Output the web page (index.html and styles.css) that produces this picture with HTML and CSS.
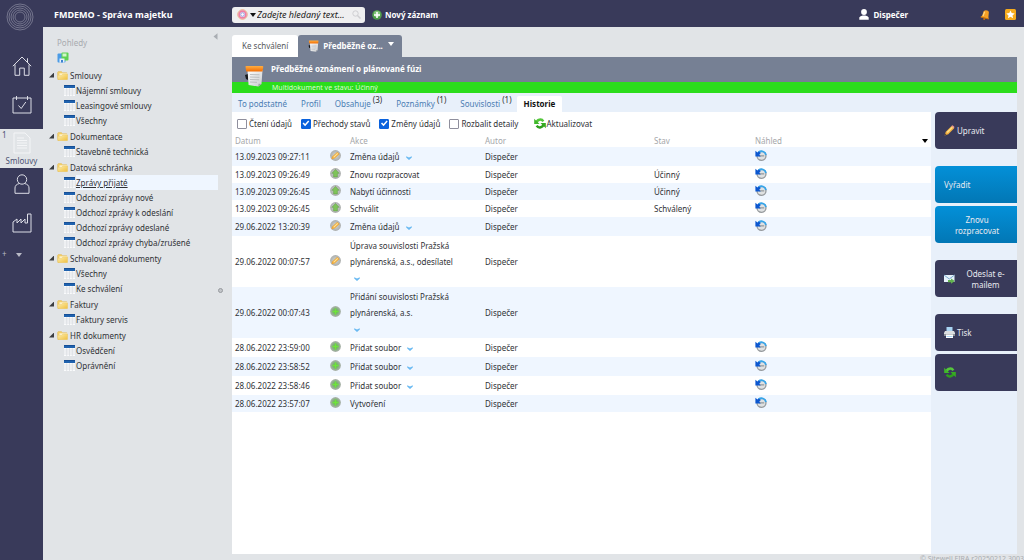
FILE: index.html
```html
<!DOCTYPE html>
<html lang="cs">
<head>
    <meta charset="UTF-8">
    <meta name="viewport" content="width=device-width, initial-scale=1.0">
    <title>FMDEMO - Správa majetku</title>
    <link rel="stylesheet" href="styles.css">
</head>
<body>
    <!-- Shared icons -->
    <svg class="sprite" aria-hidden="true">
        <defs>
            <linearGradient id="folderFill" x1="0" y1="0" x2="1" y2="1">
                <stop offset="0" stop-color="#fdeeb0"/><stop offset="1" stop-color="#f0c040"/>
            </linearGradient>
            <radialGradient id="grayBall">
                <stop offset="0.4" stop-color="#c3c6c3"/><stop offset="1" stop-color="#abaead"/>
            </radialGradient>
            <radialGradient id="greenBall">
                <stop offset="0.3" stop-color="#6fae66"/><stop offset="1" stop-color="#adb3ad"/>
            </radialGradient>
            <linearGradient id="orangeBar" x1="0" y1="0" x2="0" y2="1">
                <stop offset="0" stop-color="#ffae42"/><stop offset="1" stop-color="#f26a00"/>
            </linearGradient>
            <linearGradient id="paperFill" x1="0" y1="0" x2="1" y2="1">
                <stop offset="0" stop-color="#ffffff"/><stop offset="1" stop-color="#c9cbcd"/>
            </linearGradient>
        </defs>
        <symbol id="i-folder" viewBox="0 0 11 9">
            <path d="M.5 1.5 1.2.6h3.3l.9 1.1h4.4v6.6H.9z" fill="#f3cf69" stroke="#e3b95a" stroke-width=".5"/>
            <path d="M2.4 2.4h7.9v6H2.4z" fill="#fff8da"/>
            <path d="M.7 4.2h4L5.8 3h4.7v5.5H.9z" fill="url(#folderFill)" stroke="#e8bf55" stroke-width=".4"/>
        </symbol>
        <symbol id="i-table" viewBox="0 0 11 11">
            <path d="M0 0h11v11H0z" fill="#fafbfc"/>
            <path d="M0 5h11M0 7h11M0 9h11M2.7 3v8M5.5 3v8M8.3 3v8" stroke="#d3d6dc" stroke-width=".6"/>
            <path d="M0 0h11v3H0z" fill="#1f62ae"/>
            <path d="M0 0h11v1H0z" fill="#164f96"/>
        </symbol>
        <symbol id="i-pencil" viewBox="0 0 11 11">
            <path d="M.6 10.4 1.8 6.7 7.6 1l2.6 2.3-5.9 6z" fill="#f3b040"/>
            <path d="M2.6 7 8 1.7l1 .9L3.7 8z" fill="#ffe38c"/>
            <path d="m7.4 1.1 1.2-.8 1.9 1.8-.8 1.3z" fill="#ee9b92"/>
            <path d="M.6 10.4 1.2 8.6l1.3 1.2z" fill="#5a4630"/>
        </symbol>
        <symbol id="i-edit" viewBox="0 0 11 11">
            <circle cx="5.5" cy="5.5" r="5.4" fill="url(#grayBall)"/>
            <path d="M1.4 9.3 2.2 6.6 7.200 1.900l2.400 2-5.100 4.700z" fill="#f0a836"/>
            <path d="M3.1 6.900 7.300 2.900l.9.8-4.200 4z" fill="#ffe59a"/>
        </symbol>
        <symbol id="i-up" viewBox="0 0 11 11">
            <circle cx="5.5" cy="5.5" r="5.4" fill="url(#grayBall)"/>
            <path d="m5.500 1.500 3.600 3.800H7.400v3.600H3.600V5.300H1.900z" fill="#7fc459" stroke="#5c9c44" stroke-width=".5"/>
        </symbol>
        <symbol id="i-plus" viewBox="0 0 11 11">
            <circle cx="5.5" cy="5.5" r="5.4" fill="url(#greenBall)"/>
            <path d="M5.5 2.5v6M2.5 5.5h6" stroke="#6fe53a" stroke-width="1.6"/>
        </symbol>
        <symbol id="i-preview" viewBox="0 0 12 11">
            <circle cx="6.500" cy="5.800" r="4.500" fill="#dfe1e2" stroke="#95999c" stroke-width="1.300"/>
            <path d="M4 5.900h5.200" stroke="#82878a" stroke-width="1"/>
            <path d="M3.500 2.500A4.500 4.500 0 0 1 11 5" fill="none" stroke="#36a5ea" stroke-width="1.800"/>
            <path d="M.4.700v5.800h5.400L4.300 4.700l1.500-1.700-2-1.500-1.400 1z" fill="#0b57d0"/>
        </symbol>
        <symbol id="i-refresh" viewBox="0 0 12 11">
            <path d="M2.600 5A3.600 3.600 0 0 1 9.300 3.400" fill="none" stroke="#55c63c" stroke-width="2.500"/>
            <path d="M9.400 6A3.600 3.600 0 0 1 2.700 7.600" fill="none" stroke="#2f9f1e" stroke-width="2.500"/>
            <path d="M.2.700v5.200h5.300z" fill="#3fb82a"/>
            <path d="M11.800 10.300V5.100H6.500z" fill="#37ab22"/>
        </symbol>
        <symbol id="i-notepad" viewBox="0 0 20 22">
            <path d="m1 10 3-1v6l-2-1z" fill="#18191c"/>
            <path d="M3.5 5h15l-1 14-3.2 2.500L4.600 20z" fill="url(#paperFill)"/>
            <path d="m6 9.500 9.500.3M6 12l9.400.3M6 14.500l9.200.3M6 17l7 .3" stroke="#aeb1b4" stroke-width=".8"/>
            <path d="m14.300 21.500.3-2.800 2.900.3z" fill="#9fa2a5"/>
            <path d="M1.400 1.600 2.400 1h16.200l.7.800-.8 4.800H2.300z" fill="url(#orangeBar)"/>
        </symbol>
        <symbol id="i-chevron" viewBox="0 0 6 4">
            <path d="M.2.3 3 1.5 5.800.3v1.300L3 3.900.2 1.600z" fill="#69b9f2"/>
        </symbol>
    </svg>

    <div class="app">
        <!-- Module rail -->
        <nav class="rail">
            <a class="logo" href="#" aria-label="Sitewell">
                <svg width="28" height="28" viewBox="0 0 28 28" fill="none" stroke="#74758d">
                    <circle cx="14" cy="14" r="13"/><circle cx="14" cy="14" r="11"/><circle cx="14" cy="14" r="9"/><circle cx="14" cy="14" r="7"/><circle cx="14" cy="14" r="5"/>
                </svg>
            </a>
            <a class="module" href="#" aria-label="Domů">
                <svg width="20" height="20" viewBox="0 0 20 20"><path d="M.8 10.2 10 1l9.2 9.2M3 8.500v10.800h4.700v-7.200h4.600v7.200H17V8.500M15.500 6V2.300"/></svg>
            </a>
            <a class="module" href="#" aria-label="Kalendář">
                <svg width="20" height="18" viewBox="0 0 20 18"><path d="M1 2h18v15H1zM4.500 0v4M15.500 0v4M6.500 9.500l2.700 3 4.600-6.500"/></svg>
            </a>
            <a class="module active" href="#">
                <span class="count">1</span>
                <svg width="18" height="22" viewBox="0 0 18 22"><path d="M1 1h11l5 5v15H1zM4 6h7M4 8.500h10M4 11h10M4 13.500h10M4 16h10"/></svg>
                <span>Smlouvy</span>
            </a>
            <a class="module" href="#" aria-label="Osoby">
                <svg width="16" height="20" viewBox="0 0 16 20"><circle cx="8" cy="5.500" r="4.700"/><path d="M1 19.300v-5.300q0-3.500 4.500-4.500M15 19.300v-5.300q0-3.500-4.500-4.500M1 19.300h14"/></svg>
            </a>
            <a class="module" href="#" aria-label="Technologie">
                <svg width="20" height="20" viewBox="0 0 20 20"><path d="M1 19V9l4-3v4l4-4v4l4-4v4h2.500V1H19v18z"/></svg>
            </a>
            <div class="rail-more">
                <button type="button" aria-label="Přidat">+</button>
                <button type="button" aria-label="Další"><span class="caret"></span></button>
            </div>
        </nav>

        <div class="page">
            <header class="topbar">
                <h1>FMDEMO - Správa majetku</h1>
                <div class="search">
                    <svg width="11" height="11" viewBox="0 0 11 11" fill="none"><circle cx="5.500" cy="5.500" r="4.700" stroke="#eca477"/><circle cx="5.500" cy="5.500" r="3.400" stroke="#ef7fa5" stroke-width="1.700"/><circle cx="5.500" cy="5.500" r="1.800" fill="#fff" stroke="#9b9ae0"/></svg>
                    <span class="caret"></span>
                    <input type="text" placeholder="Zadejte hledaný text..." aria-label="Hledat">
                    <svg width="9" height="9" viewBox="0 0 9 9" fill="none" stroke="#cfcfd2"><circle cx="3.500" cy="3.500" r="2.700"/><path d="m5.500 5.500 3 3" stroke-width="1.500"/></svg>
                </div>
                <button class="new-record" type="button">
                    <svg width="10" height="10" viewBox="0 0 10 10"><circle cx="5" cy="5" r="4.800" fill="#4f9f4b"/><circle cx="5" cy="4" r="3.200" fill="#82c47a"/><path d="M5 2v6M2 5h6" stroke="#fff" stroke-width="1.600"/></svg>
                    Nový záznam
                </button>
                <button class="user" type="button">
                    <svg width="10" height="11" viewBox="0 0 10 11" fill="#fff"><circle cx="5" cy="3" r="2.900"/><path d="M.3 10.700V8.500Q1 7 3.700 6.600h2.600Q9 7 9.700 8.500v2.200z"/></svg>
                    Dispečer
                </button>
                <button class="bell" type="button" aria-label="Upozornění">
                    <svg width="10" height="10" viewBox="0 0 10 10"><path d="M3.600 1.200Q5.500-.4 8 .8l.9 1.100-.5 5.100.3 2L.7 7l1.500-1.400z" fill="#f6a024"/><path d="M4.700 1.700 3 6" stroke="#ffd884" stroke-width="1.200"/><path d="m.7 7 8 2" stroke="#c66f0c"/><circle cx="4.200" cy="9" r="1" fill="#c66f0c"/></svg>
                </button>
                <button type="button" aria-label="Oblíbené">
                    <svg width="11" height="11" viewBox="0 0 11 11"><rect width="11" height="11" rx="1.500" fill="#f6ab1d"/><path d="m5.500 1.400 1.200 2.700 3 .3-2.200 2 .6 2.900-2.600-1.500-2.600 1.500.6-2.900-2.200-2 3-.3z" fill="#fff"/></svg>
                </button>
            </header>

            <div class="workspace">
                <!-- Views tree -->
                <aside class="sidebar">
                    <div class="sidebar-head">
                        <h2>Pohledy</h2>
                        <button type="button" aria-label="Skrýt panel"><svg width="5" height="7" viewBox="0 0 5 7"><path d="M4.500.3v6.400L.5 3.500z" fill="#a9adb3"/></svg></button>
                    </div>
                    <button class="views" type="button" aria-label="Uspořádat pohledy">
                        <svg width="12" height="12" viewBox="0 0 12 12"><rect x=".5" y="1.500" width="8" height="9" rx="1" fill="#4b9be6"/><rect x="4.500" y=".5" width="7" height="8" rx="1" fill="#5fd152"/><path d="M5.500 1.500h4v3h-4z" fill="#d3f6c9"/><path d="M2.500 6.500h5v4h-5z" fill="#e5f0fb"/><path d="M4 8h2v2.500H4z" fill="#3c80cf"/></svg>
                    </button>
                    <ul class="tree">
                        <li class="folder"><a href="#"><span class="twisty"></span><svg><use href="#i-folder"/></svg><span>Smlouvy</span></a>
                            <ul>
                                <li><a href="#"><svg><use href="#i-table"/></svg><span>Nájemní smlouvy</span></a></li>
                                <li><a href="#"><svg><use href="#i-table"/></svg><span>Leasingové smlouvy</span></a></li>
                                <li><a href="#"><svg><use href="#i-table"/></svg><span>Všechny</span></a></li>
                            </ul>
                        </li>
                        <li class="folder"><a href="#"><span class="twisty"></span><svg><use href="#i-folder"/></svg><span>Dokumentace</span></a>
                            <ul>
                                <li><a href="#"><svg><use href="#i-table"/></svg><span>Stavebně technická</span></a></li>
                            </ul>
                        </li>
                        <li class="folder"><a href="#"><span class="twisty"></span><svg><use href="#i-folder"/></svg><span>Datová schránka</span></a>
                            <ul>
                                <li class="selected"><a href="#"><svg><use href="#i-table"/></svg><span>Zprávy přijaté</span></a></li>
                                <li><a href="#"><svg><use href="#i-table"/></svg><span>Odchozí zprávy nové</span></a></li>
                                <li><a href="#"><svg><use href="#i-table"/></svg><span>Odchozí zprávy k odeslání</span></a></li>
                                <li><a href="#"><svg><use href="#i-table"/></svg><span>Odchozí zprávy odeslané</span></a></li>
                                <li><a href="#"><svg><use href="#i-table"/></svg><span>Odchozí zprávy chyba/zrušené</span></a></li>
                            </ul>
                        </li>
                        <li class="folder"><a href="#"><span class="twisty"></span><svg><use href="#i-folder"/></svg><span>Schvalované dokumenty</span></a>
                            <ul>
                                <li><a href="#"><svg><use href="#i-table"/></svg><span>Všechny</span></a></li>
                                <li><a href="#"><svg><use href="#i-table"/></svg><span>Ke schválení</span></a></li>
                            </ul>
                        </li>
                        <li class="folder"><a href="#"><span class="twisty"></span><svg><use href="#i-folder"/></svg><span>Faktury</span></a>
                            <ul>
                                <li><a href="#"><svg><use href="#i-table"/></svg><span>Faktury servis</span></a></li>
                            </ul>
                        </li>
                        <li class="folder"><a href="#"><span class="twisty"></span><svg><use href="#i-folder"/></svg><span>HR dokumenty</span></a>
                            <ul>
                                <li><a href="#"><svg><use href="#i-table"/></svg><span>Osvědčení</span></a></li>
                                <li><a href="#"><svg><use href="#i-table"/></svg><span>Oprávnění</span></a></li>
                            </ul>
                        </li>
                    </ul>
                </aside>
                <div class="splitter"><span></span></div>

                <!-- Open record -->
                <main class="record">
                    <nav class="record-tabs">
                        <a href="#">Ke schválení</a>
                        <a class="current" href="#"><svg width="11" height="12"><use href="#i-notepad"/></svg>Předběžné oz...<span class="caret"></span></a>
                    </nav>
                    <div class="record-head">
                        <svg class="record-icon" width="20" height="22"><use href="#i-notepad"/></svg>
                        <h2>Předběžné oznámení o plánované fúzi</h2>
                        <p>Multidokument ve stavu: Účinný</p>
                    </div>
                    <nav class="subtabs">
                        <a href="#">To podstatné</a>
                        <a href="#">Profil</a>
                        <a href="#">Obsahuje <sup>(3)</sup></a>
                        <a href="#">Poznámky <sup>(1)</sup></a>
                        <a href="#">Souvislosti <sup>(1)</sup></a>
                        <a class="current" href="#">Historie</a>
                    </nav>

                    <div class="record-body">
                        <section class="history">
                            <form class="filters">
                                <label><input type="checkbox">Čtení údajů</label>
                                <label><input type="checkbox" checked>Přechody stavů</label>
                                <label><input type="checkbox" checked>Změny údajů</label>
                                <label><input type="checkbox">Rozbalit detaily</label>
                                <button type="button"><svg width="12" height="11"><use href="#i-refresh"/></svg>Aktualizovat</button>
                            </form>
                            <table>
                                <colgroup>
                                    <col class="c-date"><col class="c-icon"><col class="c-action"><col class="c-author"><col class="c-state"><col>
                                </colgroup>
                                <thead>
                                    <tr><th>Datum</th><th></th><th>Akce</th><th>Autor</th><th>Stav</th><th><div class="last-head">Náhled<span class="caret"></span></div></th></tr>
                                </thead>
                                <tbody>
                                    <tr class="has-detail"><td>13.09.2023 09:27:11</td><td><svg><use href="#i-edit"/></svg></td><td>Změna údajů <button type="button" aria-label="Detail"><svg><use href="#i-chevron"/></svg></button></td><td>Dispečer</td><td></td><td><svg><use href="#i-preview"/></svg></td></tr>
                                    <tr><td>13.09.2023 09:26:49</td><td><svg><use href="#i-up"/></svg></td><td>Znovu rozpracovat</td><td>Dispečer</td><td>Účinný</td><td><svg><use href="#i-preview"/></svg></td></tr>
                                    <tr><td>13.09.2023 09:26:45</td><td><svg><use href="#i-up"/></svg></td><td>Nabytí účinnosti</td><td>Dispečer</td><td>Účinný</td><td><svg><use href="#i-preview"/></svg></td></tr>
                                    <tr><td>13.09.2023 09:26:45</td><td><svg><use href="#i-up"/></svg></td><td>Schválit</td><td>Dispečer</td><td>Schválený</td><td><svg><use href="#i-preview"/></svg></td></tr>
                                    <tr class="has-detail"><td>29.06.2022 13:20:39</td><td><svg><use href="#i-edit"/></svg></td><td>Změna údajů <button type="button" aria-label="Detail"><svg><use href="#i-chevron"/></svg></button></td><td>Dispečer</td><td></td><td><svg><use href="#i-preview"/></svg></td></tr>
                                    <tr class="has-detail"><td>29.06.2022 00:07:57</td><td><svg><use href="#i-edit"/></svg></td><td>Úprava souvislosti Pražská plynárenská, a.s., odesílatel<br><button type="button" aria-label="Detail"><svg><use href="#i-chevron"/></svg></button></td><td>Dispečer</td><td></td><td></td></tr>
                                    <tr class="has-detail"><td>29.06.2022 00:07:43</td><td><svg><use href="#i-plus"/></svg></td><td>Přidání souvislosti Pražská plynárenská, a.s.<br><button type="button" aria-label="Detail"><svg><use href="#i-chevron"/></svg></button></td><td>Dispečer</td><td></td><td></td></tr>
                                    <tr class="has-detail"><td>28.06.2022 23:59:00</td><td><svg><use href="#i-plus"/></svg></td><td>Přidat soubor <button type="button" aria-label="Detail"><svg><use href="#i-chevron"/></svg></button></td><td>Dispečer</td><td></td><td><svg><use href="#i-preview"/></svg></td></tr>
                                    <tr class="has-detail"><td>28.06.2022 23:58:52</td><td><svg><use href="#i-plus"/></svg></td><td>Přidat soubor <button type="button" aria-label="Detail"><svg><use href="#i-chevron"/></svg></button></td><td>Dispečer</td><td></td><td><svg><use href="#i-preview"/></svg></td></tr>
                                    <tr class="has-detail"><td>28.06.2022 23:58:46</td><td><svg><use href="#i-plus"/></svg></td><td>Přidat soubor <button type="button" aria-label="Detail"><svg><use href="#i-chevron"/></svg></button></td><td>Dispečer</td><td></td><td><svg><use href="#i-preview"/></svg></td></tr>
                                    <tr><td>28.06.2022 23:57:07</td><td><svg><use href="#i-plus"/></svg></td><td>Vytvoření</td><td>Dispečer</td><td></td><td><svg><use href="#i-preview"/></svg></td></tr>
                                </tbody>
                            </table>
                        </section>

                        <aside class="actions">
                            <div class="action-group">
                                <button type="button"><svg width="11" height="11"><use href="#i-pencil"/></svg>Upravit</button>
                            </div>
                            <div class="action-group flow">
                                <button type="button">Vyřadit</button>
                                <button type="button"><span>Znovu rozpracovat</span></button>
                            </div>
                            <div class="action-group">
                                <button type="button"><svg width="11" height="10" viewBox="0 0 11 10"><rect y="1" width="10.500" height="7" fill="#e6f2fb"/><path d="m0 1 5.300 4 5.200-4" fill="none" stroke="#7ba9cf"/><path d="M4 6h3V4.500L10.800 7 7 9.700V8.200H4z" fill="#62b24e"/></svg><span>Odeslat e-mailem</span></button>
                            </div>
                            <div class="action-group">
                                <button type="button"><svg width="11" height="11" viewBox="0 0 11 11"><path d="M2.500 0h6v5h-6z" fill="#a9d4f3"/><path d="M1 4h9l1 2v3H0V6z" fill="#dcdfe1"/><path d="M0 7h11v2H0z" fill="#8d9398"/><path d="M2 7.500h7V11H2z" fill="#fff"/><path d="M2.500 9.500h6" stroke="#a9d4f3"/></svg>Tisk</button>
                                <button type="button" aria-label="Obnovit"><svg width="12" height="11"><use href="#i-refresh"/></svg></button>
                            </div>
                        </aside>
                    </div>
                </main>
            </div>
            <footer>© Sitewell FIRA r20250212.3003</footer>
        </div>
    </div>
</body>
</html>
```
FILE: styles.css
```css
* {
    box-sizing: border-box;
}

body {
    margin: 0;
    background: #e1e4e7;
    color: #303236;
    font-family: "Noto Sans", "Open Sans", sans-serif;
    font-size: 8px;
    line-height: 16px;
    overflow: hidden;
}

a {
    color: inherit;
    text-decoration: none;
}

button {
    border: none;
    padding: 0;
    background: none;
    color: inherit;
    font: inherit;
    cursor: pointer;
}

h1, h2, p, ul {
    margin: 0;
    padding: 0;
    font-size: 8px;
}

ul {
    list-style: none;
}

svg {
    display: block;
    flex: none;
}

.sprite {
    position: absolute;
    width: 0;
    height: 0;
}

.caret {
    display: inline-block;
    border: 3px solid transparent;
    border-top: 4px solid currentColor;
    border-bottom: none;
}

.app {
    display: flex;
    height: 100vh;
}

.page {
    display: flex;
    flex-direction: column;
    flex: 1;
    min-width: 0;
}

/* Module rail */
.rail {
    display: flex;
    flex-direction: column;
    flex: none;
    width: 43px;
    background: #393a5a;
}

.logo {
    padding: 3px 6px 15px;
}

.module {
    display: flex;
    flex-direction: column;
    align-items: center;
    justify-content: center;
    height: 39px;
}

.module svg {
    fill: none;
    stroke: #dcdde6;
    stroke-width: 1;
}

.module.active {
    position: relative;
    justify-content: flex-end;
    margin-top: 5px;
    background: #e1e4e7;
    color: #4c5272;
    line-height: 14px;
}

.module.active svg {
    stroke: #f4f5f7;
}

.module.active ~ .module {
    padding-bottom: 8px;
}

.count {
    position: absolute;
    top: -1px;
    left: 2px;
}

.rail-more {
    display: flex;
    gap: 9px;
    padding: 0 2px;
    color: #b9bac6;
}

/* Top bar */
.topbar {
    display: flex;
    align-items: center;
    flex: none;
    height: 27px;
    padding: 2px 8px 0 11px;
    background: #393a5a;
    color: #fff;
    font-weight: bold;
}

.topbar h1 {
    width: 178px;
    font-size: 9px;
}

.topbar button {
    display: flex;
    align-items: center;
    gap: 3px;
}

.search {
    display: flex;
    align-items: center;
    width: 133px;
    height: 16px;
    padding: 0 4px 0 5px;
    border-radius: 3px;
    background: #efeff0;
    color: #111;
}

.search .caret {
    margin: 0 1px 0 2px;
}

.search input {
    flex: 1;
    min-width: 0;
    padding: 0;
    border: none;
    background: none;
    font: italic 9px "Noto Sans", sans-serif;
}

.search input::placeholder {
    color: #222;
}

.new-record {
    margin-left: 7px;
}

.topbar .user {
    gap: 4px;
    margin-left: auto;
}

.topbar .bell {
    margin: 0 15px 0 72px;
}

.workspace {
    display: flex;
    flex: 1;
    min-height: 0;
}

/* Views tree */
.sidebar {
    width: 175px;
    padding: 6px 0 0 6px;
}

.sidebar-head {
    display: flex;
    justify-content: space-between;
    height: 18px;
    padding-left: 8px;
}

.sidebar-head h2 {
    padding-top: 2px;
    color: #a8abaf;
    font-weight: normal;
}

.sidebar-head button {
    align-self: flex-start;
}

.views {
    display: block;
    margin: 1px 0 3px 8px;
}

.tree a {
    display: flex;
    align-items: center;
    height: 15px;
}

.tree .folder > a {
    height: 16px;
}

.tree a > span:last-child {
    flex: 1;
    line-height: 15px;
}

.tree svg {
    width: 11px;
    height: 11px;
    margin-right: 1px;
}

.tree .folder > a svg {
    height: 9px;
    margin-right: 2px;
}

.tree ul {
    padding-left: 15px;
}

.tree .selected span {
    background: #eff6ff;
    text-decoration: underline;
}

.twisty {
    width: 5px;
    height: 5px;
    margin-right: 3px;
    background: #3b3d40;
    clip-path: polygon(100% 0, 100% 100%, 0 100%);
}

.splitter {
    display: flex;
    align-items: center;
    width: 14px;
}

.splitter span {
    width: 5px;
    height: 5px;
    border: 1px solid #96999e;
    border-radius: 50%;
    background: #c3c6ca;
}

/* Record */
.record {
    display: flex;
    flex-direction: column;
    flex: 1;
    min-width: 0;
    margin-right: 7px;
    padding-top: 8px;
}

.record-tabs {
    display: flex;
    height: 22px;
}

.record-tabs a {
    display: flex;
    align-items: center;
    padding: 0 10px;
    border-radius: 3px 3px 0 0;
    background: #fff;
    color: #56585c;
}

.record-tabs .current {
    gap: 4px;
    padding: 0 8px 0 10px;
    background: #768094;
    color: #fff;
    font-weight: bold;
}

.record-tabs .caret {
    margin: 0 0 4px 1px;
}

.record-head {
    position: relative;
    background: #768094;
    color: #fff;
}

.record-head h2 {
    height: 25px;
    padding-left: 39px;
    line-height: 23px;
}

.record-head p {
    height: 11px;
    padding-left: 40px;
    background: #2bdd1c;
    color: #d9fcd2;
    font-size: 7px;
    line-height: 12px;
}

.record-icon {
    position: absolute;
    top: 8px;
    left: 12px;
}

.subtabs {
    display: flex;
    align-items: flex-end;
    gap: 14px;
    height: 19px;
    padding-left: 6px;
    background: #e8f0fa;
    color: #4a7db3;
}

.subtabs a {
    height: 16px;
    white-space: nowrap;
}

.subtabs sup {
    color: #303236;
    font-size: 8px;
    line-height: 1px;
}

.subtabs .current {
    margin-left: -9px;
    padding: 0 7px;
    border-radius: 2px 2px 0 0;
    background: #fff;
    color: #111;
    font-weight: bold;
}

.record-body {
    display: flex;
    flex: 1;
    min-height: 0;
}

.history {
    flex: 1;
    min-width: 0;
    background: #fff;
}

.filters {
    display: flex;
    align-items: center;
    gap: 9px;
    height: 23px;
    padding-left: 5px;
}

.filters label,
.filters button {
    display: flex;
    align-items: center;
}

.filters label {
    gap: 2px;
}

.filters button {
    margin-left: 7px;
}

.filters input {
    appearance: none;
    width: 10px;
    height: 10px;
    margin: 0;
    border: 1px solid #8f8f9d;
    border-radius: 1px;
    background: #fff;
}

.filters input:checked {
    border-color: #0a62dd;
    background: #0a62dd;
}

.filters input:checked::before {
    content: "";
    display: block;
    width: 8px;
    height: 8px;
    background: #fff;
    clip-path: polygon(8% 50%, 22% 36%, 40% 56%, 78% 12%, 92% 26%, 40% 84%);
}

table {
    width: 100%;
    border-collapse: collapse;
    table-layout: fixed;
}

.c-date {
    width: 95px;
}

.c-icon {
    width: 20px;
}

.c-action {
    width: 135px;
}

.c-author {
    width: 169px;
}

.c-state {
    width: 101px;
}

th {
    height: 12px;
    padding: 0 3px;
    color: #a5a7aa;
    font-weight: normal;
    line-height: 12px;
    text-align: left;
}

.last-head {
    display: flex;
    align-items: center;
    justify-content: space-between;
}

.last-head .caret {
    color: #000;
}

td {
    padding: 1px 3px 0;
    vertical-align: middle;
}

.has-detail td {
    padding: 2px 3px 1px;
}

tbody tr:nth-child(odd) {
    background: #eff6ff;
}

td > svg {
    width: 11px;
    height: 11px;
    margin-bottom: 4px;
}

td:last-child > svg {
    width: 12px;
}

td button {
    padding: 0 4px;
    vertical-align: middle;
    line-height: 8px;
}

td button svg {
    width: 6px;
    height: 4px;
}

/* Record actions */
.actions {
    display: flex;
    flex-direction: column;
    gap: 17px;
    width: 86px;
    padding-left: 4px;
    background: #e8f0fa;
}

.action-group {
    display: flex;
    flex-direction: column;
    gap: 3px;
}

.action-group button {
    display: flex;
    align-items: center;
    gap: 2px;
    height: 37px;
    padding: 0 7px 0 9px;
    border-radius: 4px 0 0 4px;
    background: #393a5a;
    color: #e9eaf0;
    line-height: 11px;
}

.action-group button span {
    flex: 1;
    text-align: center;
}

.action-group svg + span {
    margin-left: 4px;
}

.flow button {
    background: linear-gradient(#0390d8, #0277b5);
}

footer {
    flex: none;
    height: 6px;
    color: #a9acb0;
    font-size: 7px;
    line-height: 10px;
    text-align: right;
    white-space: nowrap;
}
```
